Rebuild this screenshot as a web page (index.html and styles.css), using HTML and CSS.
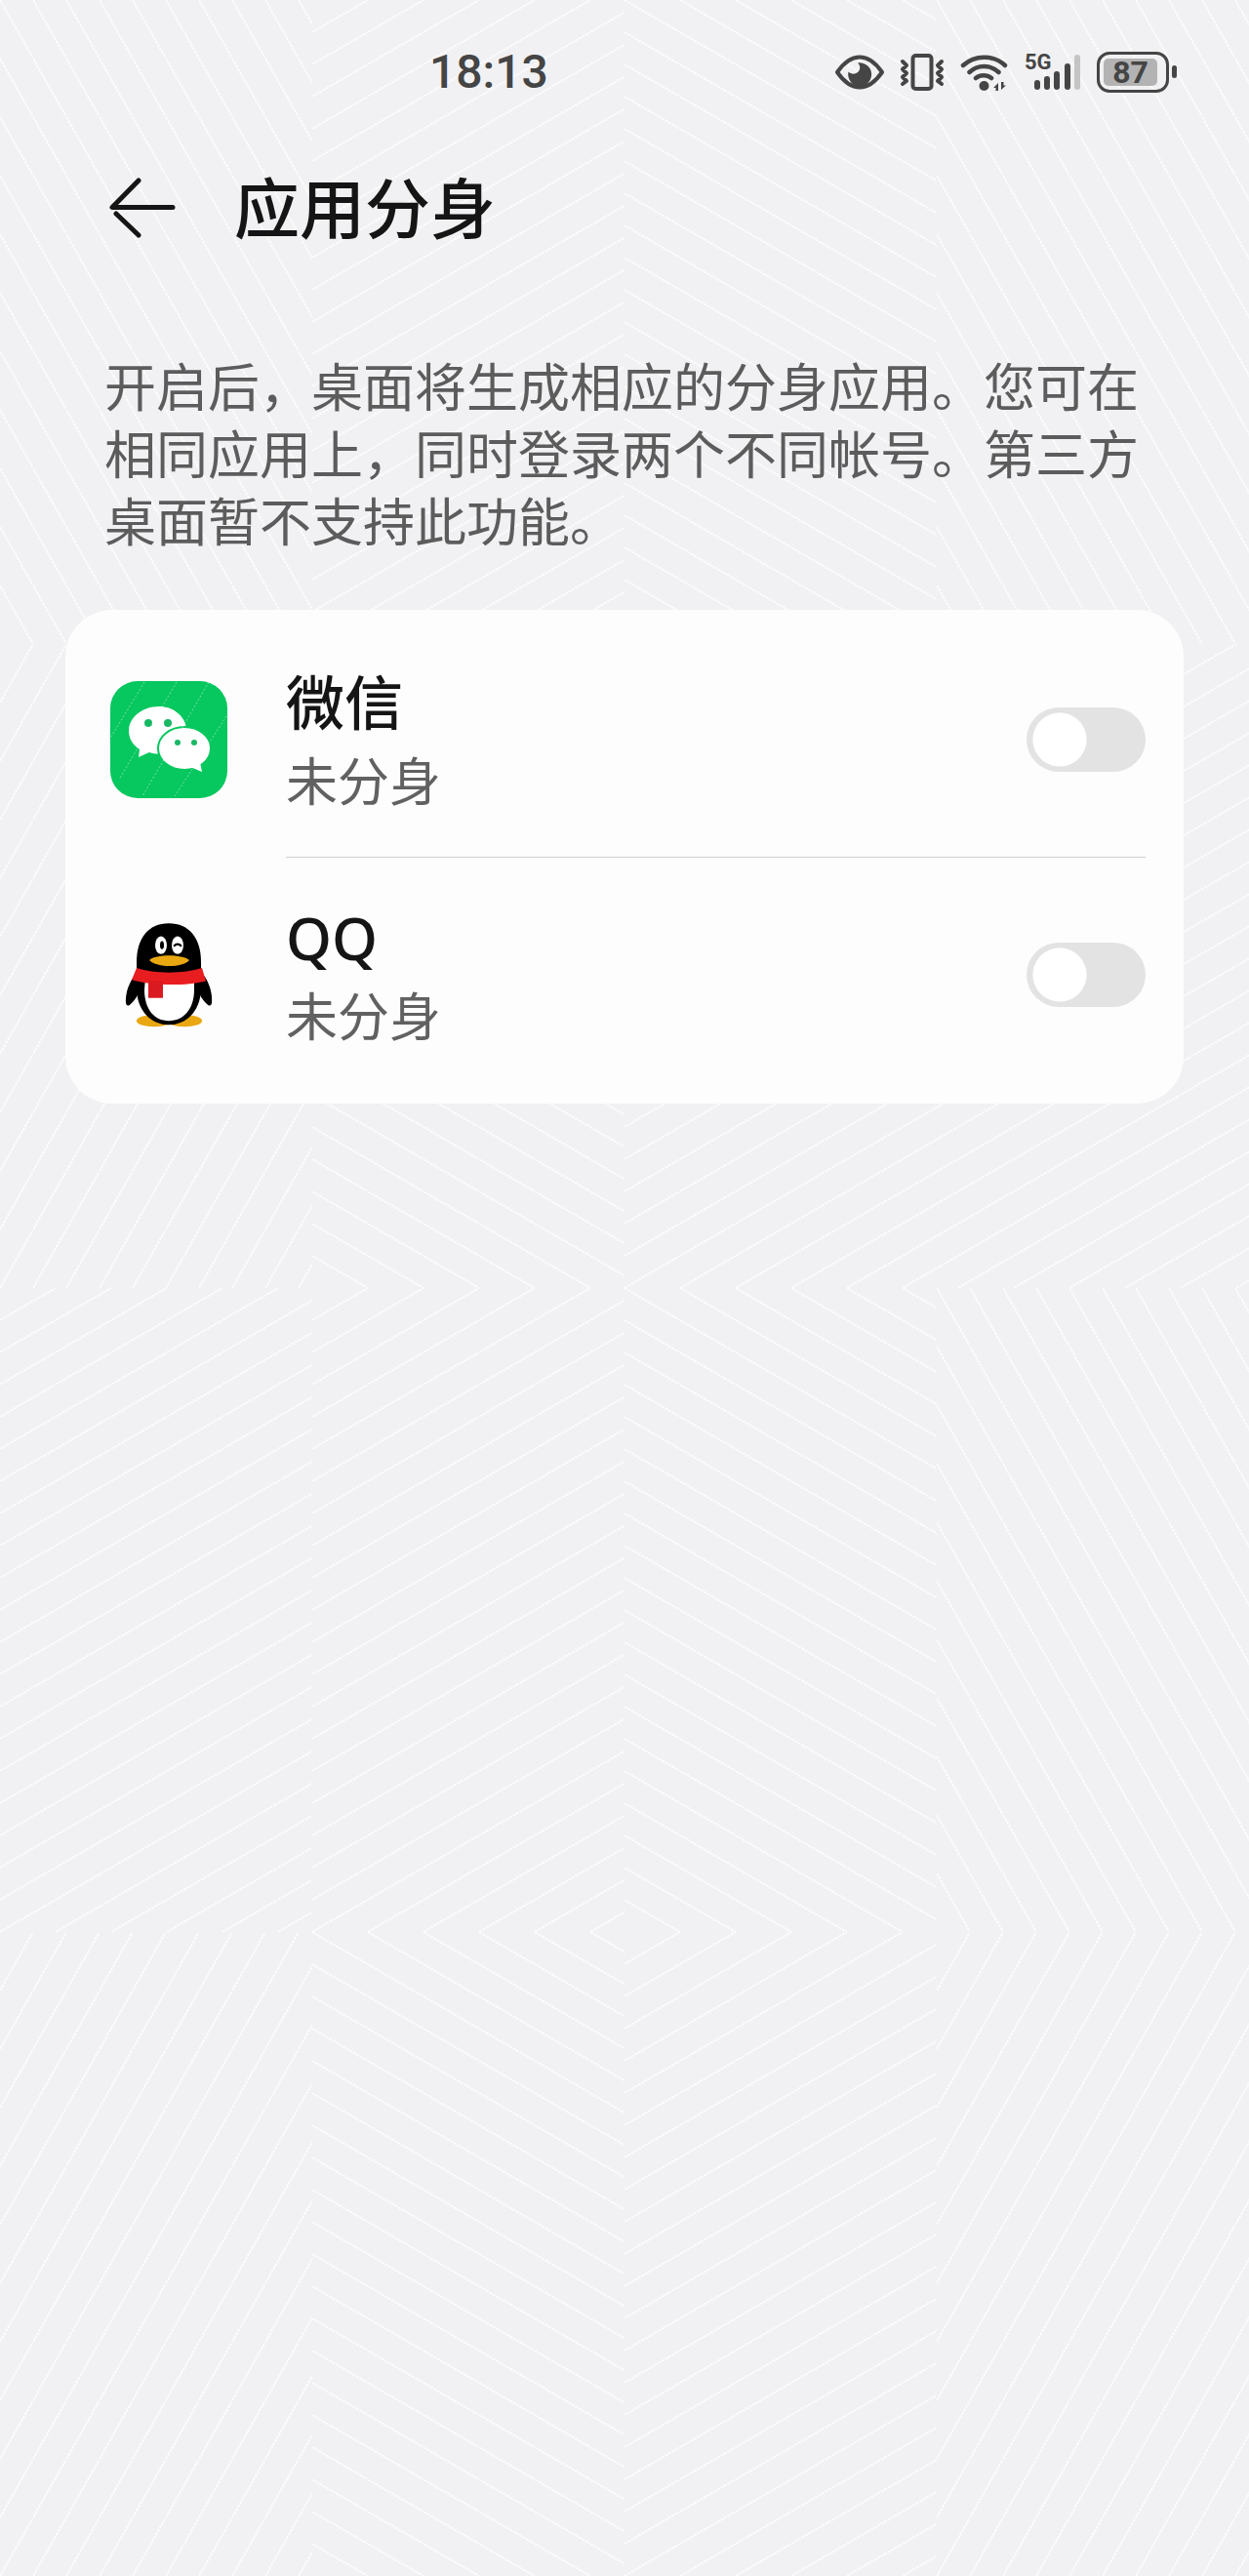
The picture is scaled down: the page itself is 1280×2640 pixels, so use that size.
FILE: index.html
```html
<!DOCTYPE html>
<html lang="zh-CN">
<head>
<meta charset="utf-8">
<meta name="viewport" content="width=device-width, initial-scale=1">
<title>应用分身</title>
<link rel="stylesheet" href="styles.css">
</head>
<body>
<svg class="backdrop" aria-hidden="true">
  <defs>
    <pattern id="low-up" width="57" height="33" patternUnits="userSpaceOnUse"><path d="M0 33L57 0"/></pattern>
    <pattern id="low-down" width="57" height="33" patternUnits="userSpaceOnUse"><path d="M0 0L57 33"/></pattern>
    <pattern id="high-up" width="34" height="60" patternUnits="userSpaceOnUse"><path d="M0 60L34 0"/></pattern>
    <pattern id="high-down" width="34" height="60" patternUnits="userSpaceOnUse"><path d="M0 0L34 60"/></pattern>
  </defs>
  <svg width="25%" height="660"><rect width="100%" height="100%" fill="url(#high-down)"/></svg>
  <svg x="25%" width="25%" height="660"><rect width="100%" height="100%" fill="url(#low-up)"/></svg>
  <svg x="50%" width="25%" height="660"><rect width="100%" height="100%" fill="url(#low-down)"/></svg>
  <svg x="75%" width="25%" height="660"><rect width="100%" height="100%" fill="url(#high-down)"/></svg>
  <svg y="660" width="25%" height="660"><rect width="100%" height="100%" fill="url(#high-up)"/></svg>
  <svg x="25%" y="660" width="25%" height="660"><rect width="100%" height="100%" fill="url(#low-down)"/></svg>
  <svg x="50%" y="660" width="50%" height="660"><rect width="100%" height="100%" fill="url(#low-up)"/></svg>
  <svg y="1320" width="25%" height="660"><rect width="100%" height="100%" fill="url(#low-up)"/></svg>
  <svg x="25%" y="1320" width="25%" height="660"><rect width="100%" height="100%" fill="url(#low-up)"/></svg>
  <svg x="50%" y="1320" width="25%" height="660"><rect width="100%" height="100%" fill="url(#low-down)"/></svg>
  <svg x="75%" y="1320" width="25%" height="660"><rect width="100%" height="100%" fill="url(#high-down)"/></svg>
  <svg y="1980" width="25%" height="660"><rect width="100%" height="100%" fill="url(#high-up)"/></svg>
  <svg x="25%" y="1980" width="25%" height="660"><rect width="100%" height="100%" fill="url(#low-down)"/></svg>
  <svg x="50%" y="1980" width="25%" height="660"><rect width="100%" height="100%" fill="url(#low-up)"/></svg>
  <svg x="75%" y="1980" width="25%" height="660"><rect width="100%" height="100%" fill="url(#high-up)"/></svg>
</svg>

<div class="status">
  <time class="clock">18:13</time>
  <div class="indicators">
    <svg class="ico-eye" viewBox="0 0 50 36" role="img" aria-label="护眼模式"><path d="M2 18C9 8 16 2.500 25 2.500S41 8 48 18C41 28 34 33.500 25 33.500S9 28 2 18Z" fill="none" stroke="#454545" stroke-width="4" stroke-linejoin="round"/><path d="M23 8.500A12 12 0 1 1 13.500 17.500C16 20 20 20.500 23 18S26 11 23 8.500Z" fill="#454545"/></svg>
    <svg class="ico-vibrate" viewBox="0 0 46 38" role="img" aria-label="振动"><g fill="none" stroke="#454545" stroke-width="4" stroke-linejoin="round" stroke-linecap="round"><rect x="13.500" y="2" width="19" height="34" rx="3"/><path d="M3 8L7 12L3 16L7 20L3 24L7 28L3 31M43 8L39 12L43 16L39 20L43 24L39 28L43 31" stroke-width="4"/></g></svg>
    <svg class="ico-wifi" viewBox="0 0 50 40" role="img" aria-label="无线网络"><g fill="none" stroke="#454545" stroke-width="4.500" stroke-linecap="round"><path d="M3 13A32 32 0 0 1 46 13M9.500 20A22 22 0 0 1 39.500 20M16 26A13 13 0 0 1 32 26"/></g><circle cx="24.500" cy="34" r="5" fill="#454545"/><path d="M39 31V39H36.500V36H34ZM42 30V38L47 33.500H44.500V30Z" fill="#454545"/></svg>
    <div class="signal">
      <span class="signal-type">5G</span>
      <svg class="ico-signal" viewBox="0 0 50 38" role="img" aria-label="信号"><g stroke="#454545" stroke-width="6" stroke-linecap="round"><path d="M5 30V34M15 26V34M25 21V34M36 13V34"/><path d="M46 4V34" stroke="#c4c4c5"/></g></svg>
    </div>
    <div class="battery"><span class="battery-level">87</span></div>
  </div>
</div>

<header class="topbar">
  <button class="back" type="button" aria-label="返回">
    <svg viewBox="0 0 68 62"><path d="M30 3L3 30.500H65M7 37L30 59" fill="none" stroke="#151515" stroke-width="5" stroke-linecap="round" stroke-linejoin="round"/></svg>
  </button>
  <h1 class="title">应用分身</h1>
</header>

<main>
  <p class="intro">开启后，桌面将生成相应的分身应用。您可在相同应用上，同时登录两个不同帐号。第三方桌面暂不支持此功能。</p>
  <ul class="card">
    <li class="app">
      <svg class="app-icon" viewBox="0 0 120 120" aria-hidden="true">
        <rect width="120" height="120" rx="28" fill="#07c75f"/>
        <path d="M50 26C33 26 19 37 19 51C19 60 24 66 30 70L29 78L40 73C45 75 51 75 56 74L78 48C76 35 64 26 50 26Z" fill="#fff"/>
        <ellipse cx="76" cy="69" rx="27" ry="22" fill="#fff" stroke="#07c75f" stroke-width="2"/>
        <path d="M82 88L94 93L92 83Z" fill="#fff"/>
        <g fill="#18b865"><circle cx="39" cy="43" r="4"/><circle cx="59" cy="43" r="4"/><circle cx="69" cy="63" r="3"/><circle cx="86" cy="63" r="3"/></g>
        <path d="M35 1L1 57M68 1L9 101M101 1L33 118M119 36L66 118" fill="none" stroke="#fff" stroke-opacity=".45" stroke-dasharray="2 2"/>
      </svg>
      <div class="app-body">
        <label class="app-text" for="wechat"><span class="app-name">微信</span><span class="app-state">未分身</span></label>
        <input class="switch" type="checkbox" role="switch" id="wechat">
      </div>
    </li>
    <li class="app">
      <svg class="app-icon" viewBox="0 0 120 120" aria-hidden="true">
        <g transform="translate(0 -4) scale(1 1.020)">
        <ellipse cx="45" cy="109" rx="18" ry="6" fill="#e9a712"/><ellipse cx="76" cy="109" rx="18" ry="6" fill="#e9a712"/>
        <path d="M28 60C20 68 15 81 16 91C17 97 22 92 27 85L34 68ZM93 60C101 68 105 81 104 91C103 97 98 92 93 85L86 68Z" fill="#000"/>
        <path d="M27 50C27 26 39 11 60 11S93 26 93 50V76C93 98 79 113 60 113S27 98 27 76Z" fill="#000"/>
        <path d="M36 65H86V78C86 96 76 109 60 109S35 96 35 78Z" fill="#fff"/>
        <path d="M27 56C45 62 75 62 94 56L98 69C78 74 43 74 22 68Z" fill="#e81d20"/>
        <path d="M39 69H54V86H39Z" fill="#d91a20"/>
        <ellipse cx="52" cy="33" rx="6" ry="9" fill="#fff"/><ellipse cx="69" cy="33" rx="6" ry="9" fill="#fff"/>
        <ellipse cx="53" cy="33" rx="2" ry="4" fill="#000"/><path d="M65 34Q69 30 73 34" fill="none" stroke="#000" stroke-width="2"/>
        <path d="M40 48C47 42 73 42 81 48C74 56 48 56 40 48Z" fill="#e9a712"/>
        </g>
      </svg>
      <div class="app-body">
        <label class="app-text" for="qq"><span class="app-name">QQ</span><span class="app-state">未分身</span></label>
        <input class="switch" type="checkbox" role="switch" id="qq">
      </div>
    </li>
  </ul>
</main>
</body>
</html>
```
FILE: styles.css
```css
* { box-sizing: border-box; }

body {
  position: relative;
  min-height: 100vh;
  margin: 0;
  background: #f1f1f3;
  color: #151515;
  font-family: "Noto Sans", "Noto Sans CJK SC", sans-serif;
}

.backdrop {
  position: absolute;
  inset: 0;
  z-index: -1;
  width: 100%;
  height: 100%;
}

.backdrop path {
  fill: none;
  stroke: #fcfcfd;
  stroke-width: 2;
  stroke-dasharray: 3 1;
}

.status {
  display: flex;
  align-items: center;
  justify-content: space-between;
  height: 148px;
  padding: 0 82px 0 440px;
  color: #454545;
}

.clock {
  font-family: Roboto, sans-serif;
  font-size: 48px;
  font-weight: 500;
  line-height: 56px;
}

.indicators {
  display: flex;
  align-items: center;
  gap: 16px;
}

.indicators svg { display: block; }
.ico-eye { width: 50px; height: 36px; }
.ico-vibrate { width: 46px; height: 38px; }
.ico-wifi { width: 50px; height: 40px; }

.signal { position: relative; padding-left: 8px; }
.ico-signal { width: 50px; height: 38px; }

.signal-type {
  position: absolute;
  top: -3px;
  left: 0;
  font: 700 22px/24px Roboto, sans-serif;
}

.battery {
  position: relative;
  width: 74px;
  height: 42px;
  padding: 4px;
  border: 3px solid #454545;
  border-radius: 13px;
}

.battery::after {
  content: "";
  position: absolute;
  top: 11px;
  right: -11px;
  width: 5px;
  height: 13px;
  border-radius: 3px;
  background: #454545;
}

.battery-level {
  display: block;
  width: 55px;
  border-radius: 5px;
  background: #b3b3b4;
  font: 700 32px/28px Roboto, sans-serif;
  text-align: center;
}

.topbar {
  display: flex;
  align-items: center;
  gap: 60px;
  height: 130px;
  padding: 0 112px;
}

.back {
  width: 68px;
  height: 62px;
  padding: 0;
  border: 0;
  background: none;
}

.back svg { display: block; width: 68px; height: 62px; }

.title {
  margin: 0;
  font-size: 67px;
  font-weight: 500;
  line-height: 96px;
}

.intro {
  margin: 82px 107px 58px;
  color: #5c5c5d;
  font-family: "Noto Sans CJK SC", sans-serif;
  font-size: 53px;
  line-height: 69px;
}

.card {
  margin: 0 67px;
  padding: 12px 39px 12px 46px;
  border-radius: 48px;
  background: #fdfdfd;
  list-style: none;
}

.app { display: flex; align-items: center; gap: 60px; }
.app-icon { flex: none; width: 120px; height: 120px; }

.app-body {
  display: flex;
  flex: 1;
  align-items: center;
  justify-content: space-between;
  height: 241px;
}

.app + .app .app-body { border-top: 1px solid #cfcfd0; }

.app-text { display: flex; flex-direction: column; }

.app-name {
  font-size: 60px;
  font-weight: 500;
  line-height: 86px;
}

.app-state {
  color: #616161;
  font-size: 53px;
  line-height: 76px;
}

.switch {
  width: 122px;
  height: 66px;
  margin: 0;
  border-radius: 33px;
  appearance: none;
  background: radial-gradient(circle at 34px 33px, #fff 27px, #e3e3e3 28px);
}

.switch:checked {
  background: radial-gradient(circle at 88px 33px, #fff 27px, #0a59f7 28px);
}
```
